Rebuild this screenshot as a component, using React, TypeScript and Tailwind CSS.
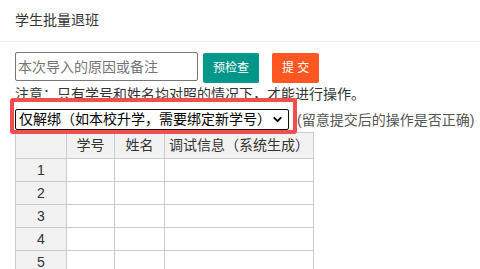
import { ChevronDown } from "lucide-react";

const rows = [1, 2, 3, 4, 5, 6];

const App = () => {
  return (
    <div className="w-[480px] h-[269px] overflow-hidden bg-white text-[14px] text-[#333] font-['Liberation_Sans','Noto_Sans_CJK_SC',sans-serif]">
      {/* Card header */}
      <div className="h-[42px] px-[15px] flex items-center border-b border-[#f2f2f2]">
        学生批量退班
      </div>

      {/* Card body */}
      <div className="relative pt-[10px] pl-[15px]">
        <div className="flex items-start">
          <input
            className="w-[183px] h-[29px] px-[2px] border border-[#767676] rounded-[2px] text-[14px] leading-[27px] placeholder:text-[#757575] outline-none"
            placeholder="本次导入的原因或备注"
          />
          <button className="ml-[5px] mt-[1px] h-[30px] px-[10px] rounded-[2px] bg-[#009688] text-white text-[12px]">
            预检查
          </button>
          <button className="ml-[13px] mt-[1px] h-[30px] px-[10px] rounded-[2px] bg-[#ff5722] text-white text-[12px]">
            提 交
          </button>
        </div>

        <p className="mt-[1px] leading-[20px] text-[#333] whitespace-nowrap">注意：只有学号和姓名均对照的情况下，才能进行操作。</p>

        <div className="mt-[5px] flex items-center whitespace-nowrap">
          <div className="shrink-0 w-[274px] h-[21px] flex items-center justify-between pl-[3px] pr-[4px] border border-[#111] rounded-[2px] text-black">
            <span className="leading-[19px]">仅解绑（如本校升学，需要绑定新学号）</span>
            <ChevronDown className="shrink-0 w-[13px] h-[13px]" strokeWidth={3.5} />
          </div>
          <span className="shrink-0 ml-[8px] text-[#555] leading-[20px]">(留意提交后的操作是否正确)</span>
        </div>

        <table className="mt-[2px] border-collapse text-[#333]">
          <thead>
            <tr className="h-[26px] bg-[#f2f2f2]">
              <th className="w-[51px] border border-[#ccc] font-normal"></th>
              <th className="w-[48px] border border-[#ccc] font-normal">学号</th>
              <th className="w-[50px] border border-[#ccc] font-normal">姓名</th>
              <th className="w-[149px] border border-[#ccc] font-normal">调试信息（系统生成）</th>
            </tr>
          </thead>
          <tbody>
            {rows.map((n) => (
              <tr key={n} className="h-[23px]">
                <td className="bg-[#f2f2f2] border border-[#ccc] text-center">{n}</td>
                <td className="border border-[#ccc]"></td>
                <td className="border border-[#ccc]"></td>
                <td className="border border-[#ccc]"></td>
              </tr>
            ))}
          </tbody>
        </table>

        {/* annotation frame drawn over the select row */}
        <div className="absolute left-[10px] top-[56px] w-[287px] h-[36px] border-[4px] border-[#f24e4e] rounded-[3px] pointer-events-none" />
      </div>
    </div>
  );
};

export default App;
